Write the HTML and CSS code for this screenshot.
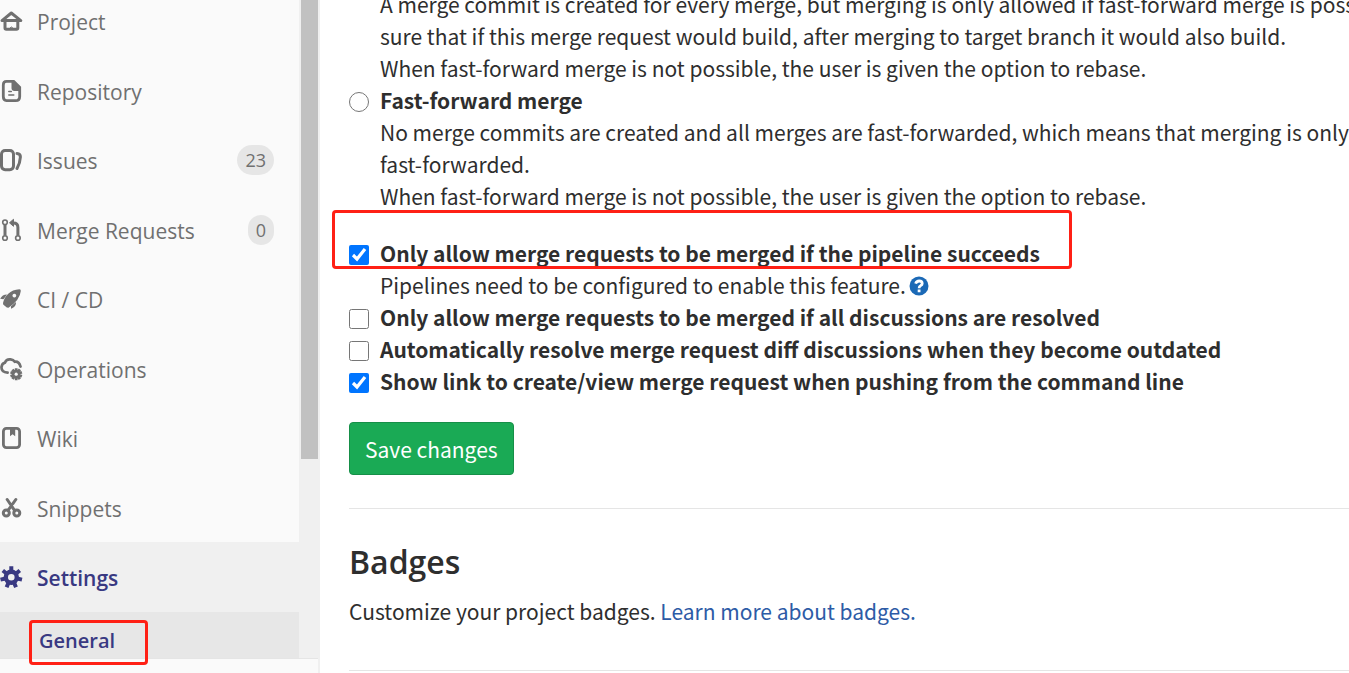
FILE: index.html
```html
<!DOCTYPE html>
<html lang="en">
<head>
<meta charset="utf-8">
<title>General settings</title>
<link rel="stylesheet" href="styles.css">
</head>
<body>
<div class="page">
  <aside class="sidebar">
    <div class="scroll-area">
      <nav class="nav">
        <ul class="nav-list">
          <li><a class="nav-link" href="#project">
            <svg class="icon" viewBox="0 0 22 22" fill="none" stroke="currentColor" stroke-width="3" stroke-linecap="round" stroke-linejoin="round"><path d="M2 10.6 11.3 3 20.8 10.6Z"/><path d="M5 11v7q0 1.300 1.300 1.300h10.200q1.300 0 1.300-1.300V11"/><path d="M10.200 17.800q1.200-2 2.400 0z" stroke-width="1"/></svg>
            <span class="nav-text">Project</span></a></li>
          <li><a class="nav-link" href="#repository">
            <svg class="icon" viewBox="0 0 22 22"><path fill="none" stroke="currentColor" stroke-width="2.8" d="M6.5 1.4h7.2l6 6v9q0 4.2-4 4.2H6.5q-3.2 0-3.2-4V5q0-3.6 3.2-3.6z"/><path fill="currentColor" d="M11.500 1h3l6.500 7v3h-6.500q-3 0-3-3z"/><path stroke="currentColor" stroke-width="1.5" stroke-linecap="round" d="M8.8 11.5h2.5M8.8 15h5"/></svg>
            <span class="nav-text">Repository</span></a></li>
          <li><a class="nav-link" href="#issues">
            <svg class="icon" viewBox="0 0 22 22" fill="none" stroke="currentColor" stroke-width="3"><rect x="1.5" y="1.5" width="12" height="19.2" rx="3.6"/><path stroke-linecap="round" d="M17 4.500q3.500.3 3.400 3.500-.3 6-3.400 11.500"/></svg>
            <span class="nav-text">Issues</span><span class="count">23</span></a></li>
          <li><a class="nav-link" href="#merge-requests">
            <svg class="icon" viewBox="0 0 22 22" fill="none" stroke="currentColor"><g stroke-width="1.6"><circle cx="5" cy="3.3" r="2.3"/><circle cx="5" cy="19" r="2.3"/><circle cx="17.9" cy="19" r="2.3"/></g><path stroke-width="3" d="M5 5.800v10.800M17.900 16.600V8.500q0-4.400-4.500-4.400"/><path fill="currentColor" stroke-width="1" stroke-linejoin="round" d="M9.500 3.800 13.500.3v7z"/></svg>
            <span class="nav-text">Merge Requests</span><span class="count">0</span></a></li>
          <li><a class="nav-link" href="#ci">
            <svg class="icon" viewBox="0 0 22 22" fill="currentColor"><path fill-rule="evenodd" d="M3 15C4.500 8 10 1.800 19.500 1.300Q21 1.300 20.800 3 20 12 8.500 19.800L6.800 19.600 3.200 16.500zM14.300 5.700a1.900 1.900 0 1 0 .1 0z"/><path d="M.2 10.800Q2.200 6.500 7 6.500L3.500 11.300z"/><path d="M11 20.800v-2.600l5-4.300q.5 4.500-5 6.900z"/></svg>
            <span class="nav-text">CI / CD</span></a></li>
          <li><a class="nav-link" href="#operations">
            <svg class="icon" viewBox="0 0 22 22"><path fill="none" stroke="currentColor" stroke-width="2.700" stroke-linecap="round" d="M7.600 14.600Q1.200 14 1.500 9 2 5.300 5 4.600 6.500.8 10.500 1.400q3 .4 4.300 2.300 4.300-.5 5.700 4.800"/><path fill="none" stroke="currentColor" stroke-width="2.800" d="M16.200 10.200v12M10.500 14.200l11.400 4M10.500 18.200l11.400-4M12.500 21l7.400-9.600M12.500 11.500l7.400 9.600"/><circle cx="16.200" cy="16.200" r="3.800" fill="currentColor"/><circle class="hole" cx="16.200" cy="16.200" r="1.600"/></svg>
            <span class="nav-text">Operations</span></a></li>
          <li><a class="nav-link" href="#wiki">
            <svg class="icon" viewBox="0 0 22 22"><rect x="3.400" y="1.400" width="16.200" height="19.200" rx="3" fill="none" stroke="currentColor" stroke-width="2.800"/><path fill="currentColor" d="M10 2h5.200v7.200l-2.600-1.900L10 9.200z"/></svg>
            <span class="nav-text">Wiki</span></a></li>
          <li><a class="nav-link" href="#snippets">
            <svg class="icon" viewBox="0 0 22 22" fill="none" stroke="currentColor" stroke-width="3"><circle cx="6.300" cy="16" r="3"/><circle cx="16.800" cy="16" r="3"/><path stroke-linecap="round" d="M7.200 2.500 14.500 13.300M15.800 2.500l-2.900 4.100M10.200 10.300l-2 2.900"/></svg>
            <span class="nav-text">Snippets</span></a></li>
          <li class="active"><a class="nav-link" href="#settings">
            <svg class="icon" viewBox="0 0 22 22"><path fill="none" stroke="currentColor" stroke-width="4" stroke-linejoin="round" d="M11.300.2V5M2.800 4.500l4 3.200M19.800 4.500l-4 3.200M.5 13.600l5-1.100M22 13.600l-5-1.100M6.600 21.300l2.100-5M16 21.300l-2.100-5"/><circle cx="11.300" cy="11.300" r="5.500" fill="none" stroke="currentColor" stroke-width="4.400"/></svg>
            <span class="nav-text">Settings</span></a></li>
        </ul>
        <a class="sub-link" href="#general"><span class="marked-word">General</span></a>
      </nav>
      <div class="track"><div class="thumb"></div></div>
    </div>
    <div class="collapse"></div>
  </aside>
  <main class="content">
    <form class="settings">
      <div class="note">A merge commit is created for every merge, but merging is only allowed if fast-forward merge is possible.<br>sure that if this merge request would build, after merging to target branch it would also build.<br>When fast-forward merge is not possible, the user is given the option to rebase.</div>
      <div class="option"><input type="radio" id="ff" name="method"><label for="ff">Fast-forward merge</label></div>
      <div class="note">No merge commits are created and all merges are fast-forwarded, which means that merging is only<br>fast-forwarded.<br>When fast-forward merge is not possible, the user is given the option to rebase.</div>
      <div class="checks">
        <div class="option marked-option"><input type="checkbox" id="pipeline" checked><label for="pipeline">Only allow merge requests to be merged if the pipeline succeeds</label></div>
        <div class="note help-note">Pipelines need to be configured to enable this feature.
          <a class="help" href="#help" aria-label="Help"><svg viewBox="0 0 20 20"><circle cx="10" cy="10" r="9.500" fill="currentColor"/><path fill="none" stroke="#fff" stroke-width="2.800" d="M6.600 7.600Q7.500 5 10.200 5q3 0 3 2.500 0 1.300-1.500 2.100-1.600.9-1.600 2.600M10.100 13.600v2.600"/></svg></a></div>
        <div class="option"><input type="checkbox" id="discussions"><label for="discussions">Only allow merge requests to be merged if all discussions are resolved</label></div>
        <div class="option"><input type="checkbox" id="outdated"><label for="outdated">Automatically resolve merge request diff discussions when they become outdated</label></div>
        <div class="option"><input type="checkbox" id="link" checked><label for="link">Show link to create/view merge request when pushing from the command line</label></div>
      </div>
      <button class="save" type="button">Save changes</button>
    </form>
    <section class="badges">
      <h2>Badges</h2>
      <p>Customize your project badges. <a href="#badges">Learn more about badges.</a></p>
    </section>
  </main>
</div>
</body>
</html>
```
FILE: styles.css
```css
*, *::after { box-sizing: border-box; }
body {
  margin: 0;
  background: #fff;
  color: #2e2e2e;
  font: 21px/32px "Noto Sans CJK SC", "Open Sans", sans-serif;
}
a { text-decoration: none; }
.page { display: flex; height: 100vh; overflow: hidden; }

.sidebar {
  flex: 0 0 320px;
  display: flex;
  flex-direction: column;
  background: #fafafa;
  border-right: 2px solid #f0f0f0;
  font-family: "Open Sans", sans-serif;
}
.scroll-area { flex: 1; min-height: 0; display: flex; }
.nav { flex: 1; }
.nav-list { list-style: none; margin: -14px 0 0; padding: 0; }
.nav-list li { display: flex; height: 70px; }
.nav-list li:nth-child(even) { height: 69px; }
.nav-link {
  flex: 1;
  display: flex;
  align-items: center;
  padding-right: 25px;
  color: #707070;
}
.nav-text { padding-top: 2px; }
.icon { width: 22px; height: 22px; margin-right: 15px; overflow: visible; }
.hole { fill: #fafafa; }
.count {
  margin-left: auto;
  padding: 0 8px;
  border-radius: 15px;
  background: #e6e6e6;
  font-size: 18px;
  line-height: 30px;
}
.active { background: #f0f0f0; }
.active .nav-link, .sub-link { color: #393982; font-weight: 600; }
.sub-link {
  display: flex;
  align-items: center;
  height: 46px;
  padding: 12px 0 0 39px;
  background: #e7e7e7;
  font-size: 20px;
}
.marked-word, .marked-option { position: relative; }
.marked-word::after, .marked-option::after {
  content: "";
  position: absolute;
  border: 3px solid #ff2015;
  border-radius: 4px;
  pointer-events: none;
  z-index: 2;
}
.marked-word::after { top: -5px; left: -10px; width: 119px; height: 45px; }
.marked-option::after { top: -27px; left: -17px; width: 740px; height: 59px; }
.track { width: 19px; padding-left: 2px; background: #f0f0f0; }
.thumb { height: 459px; background: #c1c1c1; }
.collapse { height: 15px; border-top: 1px solid #e5e5e5; }

.content { flex: 1; min-width: 0; padding-left: 29px; white-space: nowrap; overflow: hidden; }
.settings { margin-top: -12px; padding-bottom: 33px; border-bottom: 1px solid #e5e5e5; }
.note { padding-left: 31px; }
.option { display: flex; align-items: center; gap: 11px; font-weight: 700; }
.option input { width: 20px; height: 20px; margin: 4px 0 0; accent-color: #0075ff; }
.checks { margin: 25px 0; }
.help-note { display: flex; align-items: center; gap: 3px; }
.help { display: flex; padding-top: 2px; color: #1b69b6; }
.help svg { width: 20px; height: 20px; }
.save {
  display: block;
  height: 53px;
  padding: 0 15px;
  border: 1px solid #168f48;
  border-radius: 4px;
  background: #1aaa55;
  color: #fff;
  font: inherit;
}
.badges { padding: 35px 0 43px; border-bottom: 1px solid #e5e5e5; }
.badges h2 { margin: 0 0 15px; font: 600 32px/36px "Open Sans", sans-serif; }
.badges p { margin: 0; }
.badges a { color: #2d5ba6; }
```
